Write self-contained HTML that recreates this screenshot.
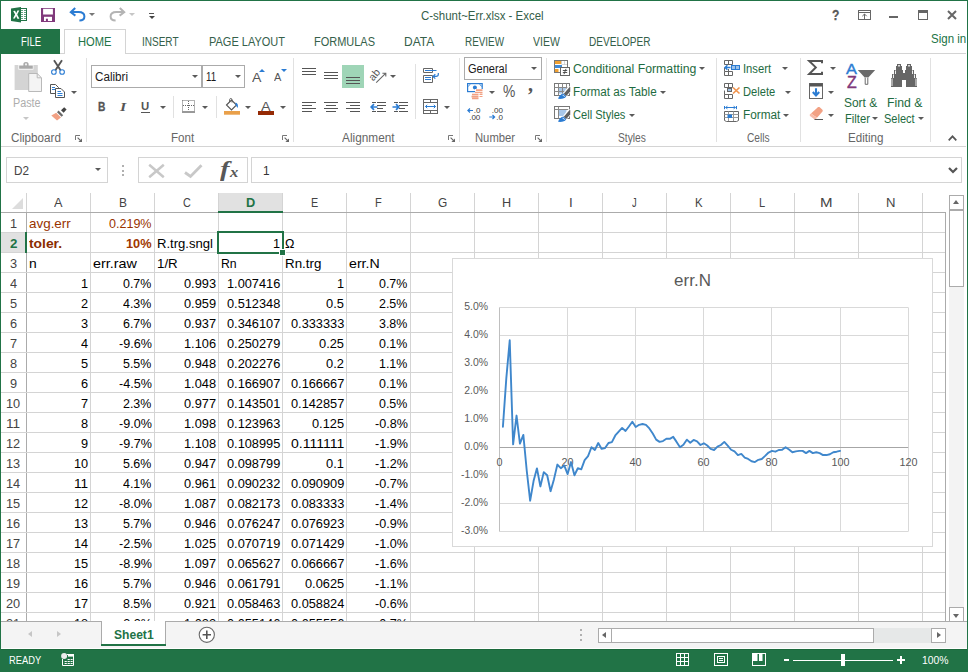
<!DOCTYPE html><html><head><meta charset="utf-8"><title>C-shunt~Err.xlsx - Excel</title><style>
*{box-sizing:border-box;margin:0;padding:0}
html,body{width:968px;height:672px;overflow:hidden;background:#fff}
body{font-family:"Liberation Sans",sans-serif;font-size:12px;color:#444;position:relative}
#w{position:absolute;left:0;top:0;width:968px;height:672px;overflow:hidden;background:#fff}
.a{position:absolute}
.t{position:absolute;white-space:nowrap;line-height:1}
.sep{position:absolute;width:1px;background:#e1e1e1}
.car{position:absolute;width:0;height:0;border-left:3px solid transparent;border-right:3px solid transparent;border-top:3px solid #5a5a5a}
svg{position:absolute;overflow:visible}
</style></head><body><div id="w">
<svg style="left:11px;top:6px" width="17" height="17" viewBox="0 0 17 17">
<rect x="8" y="2.5" width="7.5" height="12" fill="#fff" stroke="#217346" stroke-width="1"/>
<g stroke="#4f9a72" stroke-width="0.9"><path d="M10 4.5h2M13 4.5h2M10 6.5h2M13 6.5h2M10 8.5h2M13 8.5h2M10 10.5h2M13 10.5h2M10 12.5h2M13 12.5h2"/></g>
<path d="M0 2.6L10 1V16.6L0 15Z" fill="#217346"/>
<path d="M2.2 4.9L4.1 4.8L5.2 7.2L6.4 4.6L8.3 4.5L6.2 8.6L8.4 12.8L6.4 12.7L5.1 10L3.9 12.5L2 12.4L4.1 8.6Z" fill="#fff"/>
</svg>
<svg style="left:41px;top:8px" width="14" height="14" viewBox="0 0 14 14">
<path d="M0 0H14V14H0Z" fill="#80397b"/>
<rect x="2.1" y="0.8" width="9.8" height="5.7" fill="#fff"/>
<rect x="3" y="8.8" width="8" height="4.2" fill="#fff"/>
<rect x="4.9" y="10.7" width="2" height="2.3" fill="#80397b"/>
</svg>
<svg style="left:69px;top:7px" width="17" height="15" viewBox="0 0 17 15">
<path d="M6.2 1L1.8 5.2L6.4 8.6" fill="none" stroke="#2b7cd3" stroke-width="2" stroke-linejoin="miter"/>
<path d="M2.4 5.1H9.6C13.4 5.1 15.4 7.2 15.4 9.6C15.4 12.2 13.2 13.6 10.4 13.6" fill="none" stroke="#2b7cd3" stroke-width="2"/>
</svg>
<div class="car" style="left:89px;top:13px;border-top-color:#777"></div>
<svg style="left:109px;top:7px" width="17" height="15" viewBox="0 0 17 15">
<g transform="translate(17,0) scale(-1,1)">
<path d="M6.2 1L1.8 5.2L6.4 8.6" fill="none" stroke="#b4b4b4" stroke-width="2"/>
<path d="M2.4 5.1H9.6C13.4 5.1 15.4 7.2 15.4 9.6C15.4 12.2 13.2 13.6 10.4 13.6" fill="none" stroke="#b4b4b4" stroke-width="2"/>
</g></svg>
<div class="car" style="left:129px;top:13px;border-top-color:#c6c6c6"></div>
<div class="a" style="left:149px;top:13px;width:5px;height:1px;background:#555"></div>
<div class="car" style="left:148.5px;top:16px;border-top-color:#444"></div>
<div class="t" style="left:421.40px;top:10.14px;font-size:12px;color:#35604a;transform:scaleX(0.9550);transform-origin:0 0;">C-shunt~Err.xlsx - Excel</div>
<div class="t" style="left:832.00px;top:8.05px;font-size:14px;color:#5a5a5a;transform:scaleX(0.8653);transform-origin:0 0;font-weight:bold;-webkit-text-stroke:0.3px #5a5a5a;">?</div>
<svg style="left:858px;top:10px" width="13" height="10" viewBox="0 0 13 10">
<rect x="0.5" y="0.5" width="12" height="9" fill="none" stroke="#666"/><path d="M0.5 2.5H12.5" stroke="#666"/>
<path d="M6.5 9V4M4.3 6.2L6.5 4L8.7 6.2" fill="none" stroke="#666"/></svg>
<div class="a" style="left:889px;top:16px;width:9px;height:2px;background:#666"></div>
<div class="a" style="left:918px;top:10px;width:10px;height:10px;border:1px solid #666;border-top-width:3px"></div>
<svg style="left:947px;top:10px" width="10" height="10" viewBox="0 0 10 10"><path d="M1 1L9 9M9 1L1 9" stroke="#666" stroke-width="2"/></svg>
<div class="a" style="left:1px;top:53px;width:965px;height:1px;background:#d4d4d4"></div>
<div class="a" style="left:1px;top:29px;width:59px;height:25px;background:#217346"></div>
<div class="t" style="left:20.50px;top:36.14px;font-size:12px;color:#fff;transform:scaleX(0.7892);transform-origin:0 0;">FILE</div>
<div class="a" style="left:64px;top:29px;width:62px;height:25px;background:#fff;border:1px solid #d4d4d4;border-bottom:none"></div>
<div class="t" style="left:77.50px;top:36.14px;font-size:12px;color:#217346;transform:scaleX(0.9305);transform-origin:0 0;">HOME</div>
<div class="t" style="left:141.50px;top:36.14px;font-size:12px;color:#35604a;transform:scaleX(0.8335);transform-origin:0 0;">INSERT</div>
<div class="t" style="left:208.50px;top:36.14px;font-size:12px;color:#35604a;transform:scaleX(0.9166);transform-origin:0 0;">PAGE LAYOUT</div>
<div class="t" style="left:314.00px;top:36.14px;font-size:12px;color:#35604a;transform:scaleX(0.9149);transform-origin:0 0;">FORMULAS</div>
<div class="t" style="left:404.40px;top:36.14px;font-size:12px;color:#35604a;transform:scaleX(0.9992);transform-origin:0 0;">DATA</div>
<div class="t" style="left:464.60px;top:36.14px;font-size:12px;color:#35604a;transform:scaleX(0.8238);transform-origin:0 0;">REVIEW</div>
<div class="t" style="left:533.00px;top:36.14px;font-size:12px;color:#35604a;transform:scaleX(0.8739);transform-origin:0 0;">VIEW</div>
<div class="t" style="left:589.00px;top:36.14px;font-size:12px;color:#35604a;transform:scaleX(0.8383);transform-origin:0 0;">DEVELOPER</div>
<div class="t" style="left:931.30px;top:32.84px;font-size:12px;color:#217346;transform:scaleX(0.9593);transform-origin:0 0;">Sign in</div>
<div class="a" style="left:1px;top:146px;width:965px;height:1px;background:#d4d4d4"></div>
<div class="sep" style="left:86px;top:58px;height:84px"></div>
<div class="sep" style="left:293px;top:58px;height:84px"></div>
<div class="sep" style="left:459px;top:58px;height:84px"></div>
<div class="sep" style="left:546px;top:58px;height:84px"></div>
<div class="sep" style="left:716px;top:58px;height:84px"></div>
<div class="sep" style="left:800px;top:58px;height:84px"></div>
<div class="sep" style="left:930px;top:58px;height:84px"></div>
<svg style="left:14px;top:62px" width="28" height="30" viewBox="0 0 28 30">
<path d="M0.6 3H23.8V28H0.6Z" fill="#d4d4d4"/>
<path d="M4.4 3H19.4V7.6H4.4Z" fill="#fff"/>
<path d="M5.2 3.4H9.4V2C9.4 0.7 10.4 0 12 0C13.6 0 14.6 0.7 14.6 2V3.4H18.8V6.8H5.2Z" fill="#a9a9a9"/>
<circle cx="12" cy="2.4" r="1.1" fill="#f0f0f0"/>
<path d="M14.7 11.5H23.2L27.5 15.8V29.5H14.7Z" fill="#f4f4f4" stroke="#b9b9b9"/>
<path d="M23.2 11.5V15.8H27.5" fill="none" stroke="#b9b9b9"/>
</svg>
<div class="t" style="left:12.70px;top:97.14px;font-size:12px;color:#adadad;transform:scaleX(0.8994);transform-origin:0 0;">Paste</div>
<div class="car" style="left:22.6px;top:117px;border-top-color:#c6c6c6"></div>
<svg style="left:51px;top:60px" width="14" height="15" viewBox="0 0 14 15">
<path d="M3 0.3L9.6 10.2M11 0.3L4.4 10.2" stroke="#555" stroke-width="1.9" fill="none"/>
<circle cx="2.9" cy="12" r="2.3" fill="#fff" stroke="#2b7cd3" stroke-width="1.1"/>
<circle cx="11.1" cy="12" r="2.3" fill="#fff" stroke="#2b7cd3" stroke-width="1.1"/></svg>
<svg style="left:50px;top:84px" width="15" height="14" viewBox="0 0 15 14">
<path d="M0.5 0.5H5.5L8.5 3.5V9.5H0.5Z" fill="#fff" stroke="#555"/>
<path d="M2 3.5H5M2 5.5H5" stroke="#2b7cd3"/>
<path d="M5.5 4.5H11L14.5 8V13.5H5.5Z" fill="#fff" stroke="#555"/>
<path d="M7.5 7.5H11M7.5 9.5H12.5M7.5 11.5H12.5" stroke="#2b7cd3"/></svg>
<div class="car" style="left:71.4px;top:90.5px;border-top-color:#5a5a5a"></div>
<svg style="left:51px;top:107px" width="16" height="14" viewBox="0 0 16 14">
<path d="M10 3.2L13.2 0.2L15.6 2.6L12.6 5.8Z" fill="#444"/>
<path d="M7.6 3.6L12.2 8.2L10.6 9.8L6 5.2Z" fill="#6a6a6a"/>
<path d="M5.2 5.8L10 10.6L6 13.5L0.3 8.5Z" fill="#f2a184"/></svg>
<div class="t" style="left:10.50px;top:132.14px;font-size:12px;color:#666;transform:scaleX(0.9715);transform-origin:0 0;">Clipboard</div>
<svg style="left:75px;top:135px" width="7" height="7" viewBox="0 0 7 7"><path d="M0.5 5V0.5H5" fill="none" stroke="#777"/><path d="M2.6 2.6L5.6 5.6" fill="none" stroke="#666" stroke-width="1.1"/><path d="M7 3.4V7H3.4Z" fill="#666"/></svg>
<div class="a" style="left:91px;top:65px;width:111px;height:23px;border:1px solid #ababab;background:#fff"></div>
<div class="a" style="left:202px;top:65px;width:43px;height:23px;border:1px solid #ababab;background:#fff"></div>
<div class="t" style="left:94.80px;top:71.04px;font-size:12px;color:#1a1a1a;transform:scaleX(0.9703);transform-origin:0 0;">Calibri</div>
<div class="t" style="left:205.90px;top:71.04px;font-size:12px;color:#1a1a1a;transform:scaleX(0.8108);transform-origin:0 0;">11</div>
<div class="car" style="left:191.6px;top:75px;border-top-color:#5a5a5a"></div>
<div class="car" style="left:234.5px;top:75px;border-top-color:#5a5a5a"></div>
<div class="t" style="left:251.60px;top:71.10px;font-size:13px;color:#555;transform:scaleX(1.0840);transform-origin:0 0;">A</div>
<div class="a" style="left:258.5px;top:69px;width:0;height:0;border-left:3px solid transparent;border-right:3px solid transparent;border-bottom:3px solid #2b7cd3"></div>
<div class="t" style="left:274.40px;top:73.38px;font-size:10.3px;color:#555;transform:scaleX(1.0625);transform-origin:0 0;">A</div>
<div class="a" style="left:280.5px;top:69px;width:0;height:0;border-left:3px solid transparent;border-right:3px solid transparent;border-top:3px solid #2b7cd3"></div>
<div class="t" style="left:97.80px;top:100.62px;font-size:12.5px;color:#555;transform:scaleX(0.8197);transform-origin:0 0;font-weight:bold;-webkit-text-stroke:0.3px #555;">B</div>
<div class="t" style="left:120.30px;top:100.63px;font-size:12.5px;color:#555;transform:scaleX(1.2746);transform-origin:0 0;font-weight:bold;font-style:italic;font-family:'Liberation Serif',serif;">I</div>
<div class="t" style="left:141.40px;top:100.97px;font-size:11.5px;color:#555;transform:scaleX(0.9873);transform-origin:0 0;font-weight:bold;">U</div>
<div class="a" style="left:141px;top:112px;width:9px;height:1px;background:#555"></div>
<div class="car" style="left:159.5px;top:106px;border-top-color:#5a5a5a"></div>
<div class="sep" style="left:173px;top:96px;height:22px"></div>
<svg style="left:182px;top:100px" width="13" height="13" viewBox="0 0 13 13">
<path d="M0.5 0.5H12.5M0.5 0.5V11M12.5 0.5V11M6.5 1V11M1 5.5H12" stroke="#666" stroke-dasharray="1 1" fill="none"/>
<path d="M0 12H13" stroke="#555" stroke-width="1.2"/></svg>
<div class="car" style="left:202.4px;top:106px;border-top-color:#5a5a5a"></div>
<div class="sep" style="left:216px;top:96px;height:22px"></div>
<svg style="left:224px;top:98px" width="16" height="17" viewBox="0 0 16 17">
<path d="M2.5 7L7.5 2L12.5 7L7.5 12Z" fill="#fff" stroke="#555" stroke-width="1.1"/>
<path d="M5.6 4V1.6C5.6 0.9 6.2 0.5 6.8 0.5C7.5 0.5 8 0.9 8 1.6V4.5" fill="none" stroke="#555" stroke-width="0.9"/>
<path d="M11.5 4.5C13.8 5.2 14.5 7.5 13.6 10C12.8 8.8 12.4 8 11.5 7Z" fill="#2b7cd3"/>
<rect x="0" y="13" width="16" height="3.7" fill="#e9a04a"/></svg>
<div class="car" style="left:245.4px;top:106px;border-top-color:#5a5a5a"></div>
<div class="t" style="left:261.20px;top:99.79px;font-size:13.6px;color:#555;transform:scaleX(1.0582);transform-origin:0 0;">A</div>
<div class="a" style="left:258px;top:111px;width:16px;height:4px;background:#952a05"></div>
<div class="car" style="left:279.5px;top:106px;border-top-color:#5a5a5a"></div>
<div class="t" style="left:170.60px;top:132.14px;font-size:12px;color:#666;transform:scaleX(0.9662);transform-origin:0 0;">Font</div>
<svg style="left:282px;top:135px" width="7" height="7" viewBox="0 0 7 7"><path d="M0.5 5V0.5H5" fill="none" stroke="#777"/><path d="M2.6 2.6L5.6 5.6" fill="none" stroke="#666" stroke-width="1.1"/><path d="M7 3.4V7H3.4Z" fill="#666"/></svg>
<div class="a" style="left:302px;top:68px;width:14px;height:1px;background:#555"></div>
<div class="a" style="left:302px;top:71px;width:14px;height:1px;background:#555"></div>
<div class="a" style="left:302px;top:74px;width:14px;height:1px;background:#555"></div>
<div class="a" style="left:324px;top:72px;width:14px;height:1px;background:#555"></div>
<div class="a" style="left:324px;top:75px;width:14px;height:1px;background:#555"></div>
<div class="a" style="left:324px;top:78px;width:14px;height:1px;background:#555"></div>
<div class="a" style="left:342px;top:65px;width:22px;height:23px;background:#9fd5b7"></div>
<div class="a" style="left:346px;top:77px;width:14px;height:1px;background:#555"></div>
<div class="a" style="left:346px;top:80px;width:14px;height:1px;background:#555"></div>
<div class="a" style="left:346px;top:83px;width:14px;height:1px;background:#555"></div>
<svg style="left:370px;top:67px" width="17" height="17" viewBox="0 0 17 17">
<text x="-1.2" y="11.2" font-size="10.5" fill="#555" font-family="Liberation Sans, sans-serif" transform="rotate(-50 4.5 8)">ab</text>
<path d="M6.2 15.6L15.6 6.4M12.4 6.2H15.8V9.6" fill="none" stroke="#666" stroke-width="1.1"/></svg>
<div class="car" style="left:389.6px;top:75px;border-top-color:#5a5a5a"></div>
<div class="sep" style="left:415px;top:64px;height:55px"></div>
<svg style="left:423px;top:68px" width="17" height="15" viewBox="0 0 17 15">
<path d="M0.5 0.5H9.5V4.5H0.5ZM0.5 7.5H9.5V14.5H0.5Z" fill="#fff" stroke="#666"/>
<path d="M2 2.5H13.5M2 9.5H8M2 11.5H8" fill="none" stroke="#2b7cd3" stroke-width="1"/>
<path d="M15.3 5V6.3C15.3 7.8 14.4 8.4 13 8.4H10.2M12.3 6.2L10 8.4L12.3 10.6" fill="none" stroke="#2b7cd3" stroke-width="1.2"/></svg>
<div class="a" style="left:302px;top:102px;width:14px;height:1px;background:#555"></div>
<div class="a" style="left:302px;top:105px;width:10px;height:1px;background:#555"></div>
<div class="a" style="left:302px;top:108px;width:14px;height:1px;background:#555"></div>
<div class="a" style="left:302px;top:111px;width:10px;height:1px;background:#555"></div>
<div class="a" style="left:324px;top:102px;width:14px;height:1px;background:#555"></div>
<div class="a" style="left:326px;top:105px;width:10px;height:1px;background:#555"></div>
<div class="a" style="left:324px;top:108px;width:14px;height:1px;background:#555"></div>
<div class="a" style="left:326px;top:111px;width:10px;height:1px;background:#555"></div>
<div class="a" style="left:346px;top:102px;width:14px;height:1px;background:#555"></div>
<div class="a" style="left:350px;top:105px;width:10px;height:1px;background:#555"></div>
<div class="a" style="left:346px;top:108px;width:14px;height:1px;background:#555"></div>
<div class="a" style="left:350px;top:111px;width:10px;height:1px;background:#555"></div>
<div class="a" style="left:372px;top:102px;width:4px;height:1px;background:#555"></div>
<div class="a" style="left:377px;top:102px;width:9px;height:1px;background:#555"></div>
<div class="a" style="left:377px;top:105px;width:9px;height:1px;background:#555"></div>
<div class="a" style="left:377px;top:108px;width:6px;height:1px;background:#555"></div>
<div class="a" style="left:372px;top:111px;width:4px;height:1px;background:#555"></div>
<div class="a" style="left:377px;top:111px;width:9px;height:1px;background:#555"></div>
<svg style="left:369.5px;top:103px" width="8" height="8" viewBox="0 0 8 8"><path d="M7.5 4H1.5M4 1.2L1.2 4L4 6.8" fill="none" stroke="#2b7cd3" stroke-width="1.7"/></svg>
<div class="a" style="left:394px;top:102px;width:4px;height:1px;background:#555"></div>
<div class="a" style="left:399px;top:102px;width:9px;height:1px;background:#555"></div>
<div class="a" style="left:399px;top:105px;width:9px;height:1px;background:#555"></div>
<div class="a" style="left:399px;top:108px;width:6px;height:1px;background:#555"></div>
<div class="a" style="left:394px;top:111px;width:4px;height:1px;background:#555"></div>
<div class="a" style="left:399px;top:111px;width:9px;height:1px;background:#555"></div>
<svg style="left:391.5px;top:103px" width="8" height="8" viewBox="0 0 8 8"><path d="M0.5 4H6.5M4 1.2L6.8 4L4 6.8" fill="none" stroke="#2b7cd3" stroke-width="1.7"/></svg>
<svg style="left:423px;top:99px" width="15" height="15" viewBox="0 0 15 15">
<rect x="0.5" y="0.5" width="14" height="14" fill="#fff" stroke="#666"/>
<path d="M0.5 3.5H14.5M0.5 11.5H14.5M7.5 0.5V3.5M7.5 11.5V14.5" stroke="#666"/>
<path d="M2.5 7.5H12.5M4.2 5.8L2.5 7.5L4.2 9.2M10.8 5.8L12.5 7.5L10.8 9.2" fill="none" stroke="#2b7cd3"/></svg>
<div class="car" style="left:444.4px;top:106px;border-top-color:#5a5a5a"></div>
<div class="t" style="left:342.40px;top:132.14px;font-size:12px;color:#666;transform:scaleX(0.9857);transform-origin:0 0;">Alignment</div>
<svg style="left:448px;top:135px" width="7" height="7" viewBox="0 0 7 7"><path d="M0.5 5V0.5H5" fill="none" stroke="#777"/><path d="M2.6 2.6L5.6 5.6" fill="none" stroke="#666" stroke-width="1.1"/><path d="M7 3.4V7H3.4Z" fill="#666"/></svg>
<div class="a" style="left:464px;top:57px;width:78px;height:23px;border:1px solid #ababab;background:#fff"></div>
<div class="t" style="left:467.50px;top:63.14px;font-size:12px;color:#1a1a1a;transform:scaleX(0.9158);transform-origin:0 0;">General</div>
<div class="car" style="left:531.2px;top:67px;border-top-color:#5a5a5a"></div>
<svg style="left:467px;top:83px" width="16" height="16" viewBox="0 0 16 16">
<rect x="0.6" y="0.6" width="14.6" height="8" fill="#fff" stroke="#2b7cd3" stroke-width="1.2"/>
<circle cx="7.9" cy="4.6" r="2" fill="#2b7cd3"/>
<path d="M0.6 3.2C2 3.2 3 2.2 3 0.6M15.2 3.2C13.8 3.2 12.8 2.2 12.8 0.6" stroke="#2b7cd3" fill="none" stroke-width="0.8"/>
<rect x="8" y="6" width="8" height="4.5" fill="#fff"/>
<path d="M9 7.2H15.5M8 9.7H15.5" stroke="#f2a184" stroke-width="1.8"/>
<rect x="4" y="10.2" width="9" height="6" fill="#fff"/>
<path d="M5 11.5H11.5M4.5 13.6H11.5M5 15.5H11.5" stroke="#f2a184" stroke-width="1.6"/>
<path d="M12.5 11.5H15.5M12.5 13.5H15.5" stroke="#f2a184" stroke-width="1.2"/></svg>
<div class="car" style="left:488.6px;top:90.5px;border-top-color:#5a5a5a"></div>
<div class="t" style="left:503.40px;top:83.43px;font-size:16.5px;color:#555;transform:scaleX(0.8384);transform-origin:0 0;">%</div>
<div class="t" style="left:528.00px;top:74.35px;font-size:20px;color:#555;transform:scaleX(1.0000);transform-origin:0 0;font-weight:bold;font-family:'Liberation Serif',serif;">,</div>
<svg style="left:467px;top:107px" width="15" height="13" viewBox="0 0 15 13">
<path d="M6 3.5H1M3 1.5L0.9 3.5L3 5.5" fill="none" stroke="#2b7cd3" stroke-width="1.2"/>
<text x="6.8" y="6" font-size="8" fill="#3a3a3a" font-family="Liberation Sans, sans-serif">.0</text>
<text x="2.2" y="12.9" font-size="8" fill="#3a3a3a" font-family="Liberation Sans, sans-serif">.00</text></svg>
<svg style="left:489px;top:107px" width="15" height="13" viewBox="0 0 15 13">
<text x="2.8" y="6" font-size="8" fill="#3a3a3a" font-family="Liberation Sans, sans-serif">.00</text>
<path d="M0.3 10H5.5M3.5 8L5.6 10L3.5 12" fill="none" stroke="#2b7cd3" stroke-width="1.2"/>
<text x="7.2" y="12.9" font-size="8" fill="#3a3a3a" font-family="Liberation Sans, sans-serif">.0</text></svg>
<div class="t" style="left:474.80px;top:132.14px;font-size:12px;color:#666;transform:scaleX(0.9372);transform-origin:0 0;">Number</div>
<svg style="left:535.4px;top:135px" width="7" height="7" viewBox="0 0 7 7"><path d="M0.5 5V0.5H5" fill="none" stroke="#777"/><path d="M2.6 2.6L5.6 5.6" fill="none" stroke="#666" stroke-width="1.1"/><path d="M7 3.4V7H3.4Z" fill="#666"/></svg>
<svg style="left:554px;top:60px" width="16" height="16" viewBox="0 0 16 16"><rect x="0.5" y="0.5" width="13" height="12" fill="#fff" stroke="#777"/><rect x="1" y="1" width="6.5" height="3" fill="#f0a030"/><rect x="1" y="5" width="7" height="3" fill="#3f8ad6"/><rect x="1" y="9" width="3.5" height="3" fill="#f0a030"/><path d="M7.5 1V4M10.5 1V5M7.5 4.5H13" stroke="#ccc" stroke-width="0.8" fill="none"/><rect x="6.5" y="7.5" width="9" height="8" fill="#fff" stroke="#666"/><path d="M8.8 10.5H13.2M8.8 12.5H13.2M10 14.2L12 8.8" stroke="#444" stroke-width="0.9" fill="none"/></svg>
<svg style="left:554px;top:83px" width="16" height="16" viewBox="0 0 16 16"><rect x="0.5" y="0.5" width="15" height="12" fill="#fff" stroke="#777"/><rect x="4.5" y="4.5" width="8" height="6" fill="#a9c8ea"/><path d="M0.5 4.5H15.5M0.5 8.5H15.5M4.5 0.5V12.5M8.5 0.5V12.5M12.5 0.5V12.5" stroke="#888" fill="none"/><path d="M7.5 12L14.5 3L17 4L16.8 9L11.5 14.5Z" fill="#fff"/><path d="M9.8 10.8L15.6 4L16.3 4.3L16.2 8.6L12 13.2Z" fill="#606060"/><path d="M4 15.8C5 13 7 11 9.6 10.6L12.2 13.4C11 15.2 8 16.3 4 15.8Z" fill="#2b7cd3"/><path d="M8.6 12.2C9.6 12.2 10.4 12.9 10.4 13.8" stroke="#fff" stroke-width="0.9" fill="none"/></svg>
<svg style="left:554px;top:106px" width="16" height="16" viewBox="0 0 16 16"><rect x="0.5" y="0.5" width="15" height="12" fill="#fff" stroke="#777"/><rect x="4.5" y="3.5" width="8" height="6.5" fill="#a9c8ea"/><path d="M0.5 3.5H15.5M4.5 0.5V12.5" stroke="#888" fill="none"/><path d="M7.5 12L14.5 3L17 4L16.8 9L11.5 14.5Z" fill="#fff"/><path d="M9.8 10.8L15.6 4L16.3 4.3L16.2 8.6L12 13.2Z" fill="#606060"/><path d="M4 15.8C5 13 7 11 9.6 10.6L12.2 13.4C11 15.2 8 16.3 4 15.8Z" fill="#2b7cd3"/><path d="M8.6 12.2C9.6 12.2 10.4 12.9 10.4 13.8" stroke="#fff" stroke-width="0.9" fill="none"/></svg>
<div class="t" style="left:573.20px;top:62.94px;font-size:12px;color:#1e6b41;transform:scaleX(1.0213);transform-origin:0 0;">Conditional Formatting</div>
<div class="car" style="left:699.4px;top:67px;border-top-color:#5a5a5a"></div>
<div class="t" style="left:573.20px;top:85.94px;font-size:12px;color:#1e6b41;transform:scaleX(0.9753);transform-origin:0 0;">Format as Table</div>
<div class="car" style="left:659.5px;top:90.5px;border-top-color:#5a5a5a"></div>
<div class="t" style="left:573.20px;top:108.94px;font-size:12px;color:#1e6b41;transform:scaleX(0.9244);transform-origin:0 0;">Cell Styles</div>
<div class="car" style="left:628.5px;top:113.5px;border-top-color:#5a5a5a"></div>
<div class="t" style="left:617.50px;top:132.14px;font-size:12px;color:#666;transform:scaleX(0.8538);transform-origin:0 0;">Styles</div>
<svg style="left:724px;top:60px" width="16" height="16" viewBox="0 0 16 16">
<path d="M0.5 0.5H8.5V4.5H0.5ZM0.5 11.5H8.5V15.5H0.5ZM4.5 0.5V4.5M4.5 11.5V15.5M0.5 7.5V11.5M4.5 9V11.5" fill="none" stroke="#666"/>
<rect x="7.5" y="5.5" width="8" height="4" fill="#9dc3ea" stroke="#2b7cd3"/><path d="M11.5 5.5V9.5" stroke="#2b7cd3"/>
<path d="M6.5 7.5H1.2M3.4 5.2L1 7.5L3.4 9.8" fill="none" stroke="#2b7cd3" stroke-width="1.4"/></svg>
<svg style="left:724px;top:83px" width="16" height="16" viewBox="0 0 16 16">
<path d="M0.5 0.5H8.5V4.5H0.5ZM0.5 11.5H8.5V15.5H0.5ZM4.5 0.5V4.5M4.5 11.5V15.5M0.5 7.5V11.5" fill="none" stroke="#666"/>
<rect x="3.5" y="5.5" width="4" height="3" fill="#9dc3ea" stroke="#666"/>
<path d="M9 4.5L15.5 10.5M15.5 4.5L9 10.5" stroke="#f0944e" stroke-width="1.7"/></svg>
<svg style="left:724px;top:106px" width="15" height="16" viewBox="0 0 15 16">
<path d="M1.5 1.5H11.5M0.5 0V3.2M12.5 0V3.2M3.4 0.2L1.6 1.5L3.4 2.8M9.6 0.2L11.4 1.5L9.6 2.8" stroke="#2b7cd3" fill="none"/>
<path d="M0.5 5.5H14.5V14.5L12.5 15.5H2.5L0.5 14.5Z" fill="#fff" stroke="#666"/>
<path d="M0.5 8.5H14.5M0.5 11.5H14.5M4.5 5.5V15M9.5 5.5V15" stroke="#999"/>
<rect x="3.5" y="8.5" width="4.5" height="3.5" fill="#2b7cd3"/></svg>
<div class="t" style="left:743.30px;top:62.94px;font-size:12px;color:#1e6b41;transform:scaleX(0.9363);transform-origin:0 0;">Insert</div>
<div class="car" style="left:781.5px;top:67px;border-top-color:#5a5a5a"></div>
<div class="t" style="left:743.30px;top:85.94px;font-size:12px;color:#1e6b41;transform:scaleX(0.9283);transform-origin:0 0;">Delete</div>
<div class="car" style="left:785.4px;top:90.5px;border-top-color:#5a5a5a"></div>
<div class="t" style="left:743.30px;top:108.94px;font-size:12px;color:#1e6b41;transform:scaleX(0.9841);transform-origin:0 0;">Format</div>
<div class="car" style="left:783.4px;top:113.5px;border-top-color:#5a5a5a"></div>
<div class="t" style="left:746.90px;top:132.14px;font-size:12px;color:#666;transform:scaleX(0.8473);transform-origin:0 0;">Cells</div>
<svg style="left:808px;top:60px" width="15" height="15" viewBox="0 0 15 15">
<path d="M14 3.2V1H1.2L7.8 7.4L1.2 14H14V11.8" fill="none" stroke="#555" stroke-width="2" stroke-linejoin="miter"/></svg>
<div class="car" style="left:829.6px;top:67px;border-top-color:#5a5a5a"></div>
<svg style="left:809px;top:83px" width="14" height="16" viewBox="0 0 14 16">
<rect x="0.5" y="0.5" width="13" height="15" fill="#fff" stroke="#666"/><rect x="0.5" y="0.5" width="13" height="3" fill="#555"/>
<path d="M7 5.2V12.3M3.8 9L7 12.4L10.2 9" fill="none" stroke="#2b7cd3" stroke-width="2.1"/></svg>
<div class="car" style="left:827.6px;top:90.5px;border-top-color:#5a5a5a"></div>
<svg style="left:809px;top:107px" width="15" height="13" viewBox="0 0 15 13">
<path d="M8.6 0.6C9.4 -0.1 10.3 0 11 0.5L13.2 2.4C13.9 3.1 13.9 4 13.3 4.8L8 10.8L2 6.5Z" fill="#f2a184"/><path d="M2 6.5L8 10.8L7 11.9C6.3 12.4 5.6 12.3 5 11.9L1 8.9C0.5 8.4 0.5 7.8 1 7.3Z" fill="#f7bba8"/>
<path d="M5.5 12.5H14" stroke="#555"/></svg>
<div class="car" style="left:827.6px;top:113.5px;border-top-color:#5a5a5a"></div>
<div class="t" style="left:846.00px;top:61.38px;font-size:15.5px;color:#2b7cd3;transform:scaleX(1.0543);transform-origin:0 0;-webkit-text-stroke:0.4px #2b7cd3;">A</div>
<div class="t" style="left:846.80px;top:75.16px;font-size:16px;color:#80397b;transform:scaleX(0.9925);transform-origin:0 0;-webkit-text-stroke:0.4px #80397b;">Z</div>
<svg style="left:857px;top:70px" width="19" height="15" viewBox="0 0 19 15">
<path d="M0.8 0H18.2L11.3 7.6H7.7Z" fill="#6a6a6a"/><path d="M8.2 7.6V14.3H10.8V7.6" fill="#fff" stroke="#6a6a6a" stroke-width="1"/></svg>
<div class="t" style="left:844.40px;top:97.24px;font-size:12px;color:#1e6b41;transform:scaleX(0.9956);transform-origin:0 0;">Sort &amp;</div>
<div class="t" style="left:844.70px;top:113.14px;font-size:12px;color:#1e6b41;transform:scaleX(0.9337);transform-origin:0 0;">Filter</div>
<div class="car" style="left:872.4px;top:117px;border-top-color:#5a5a5a"></div>
<svg style="left:891px;top:64px" width="26" height="23" viewBox="0 0 26 23">
<path d="M6 0H10V2H11V6H12V9H14V6H15V2H16V0H20V2H21V6H23V10H25V14H26V23H15V16H11V23H0V14H1V10H3V6H5V2H6Z" fill="#666"/>
<path d="M7 1H9V2.5H7ZM17 1H19V2.5H17Z" fill="#ddd"/>
<path d="M1 14.5V22M25 14.5V22M2.5 10.5V14M23.5 10.5V14M4.5 6.5V10M21.5 6.5V10" stroke="#fff" stroke-width="0.9"/></svg>
<div class="t" style="left:886.50px;top:97.24px;font-size:12px;color:#1e6b41;transform:scaleX(1.0207);transform-origin:0 0;">Find &amp;</div>
<div class="t" style="left:884.40px;top:113.14px;font-size:12px;color:#1e6b41;transform:scaleX(0.9175);transform-origin:0 0;">Select</div>
<div class="car" style="left:917.5px;top:117px;border-top-color:#5a5a5a"></div>
<div class="t" style="left:847.90px;top:132.14px;font-size:12px;color:#666;transform:scaleX(0.9675);transform-origin:0 0;">Editing</div>
<svg style="left:948px;top:135px" width="9" height="6" viewBox="0 0 9 6"><path d="M0.7 5.3L4.5 1.3L8.3 5.3" fill="none" stroke="#555" stroke-width="1.7"/></svg>
<div class="a" style="left:6px;top:157px;width:102px;height:26px;border:1px solid #d4d4d4;background:#fff"></div>
<div class="t" style="left:13.90px;top:165.24px;font-size:12px;color:#444;transform:scaleX(0.9778);transform-origin:0 0;">D2</div>
<div class="car" style="left:94.5px;top:167.5px;border-top-color:#5a5a5a"></div>
<div class="a" style="left:122px;top:165px;width:2px;height:2px;background:#b0b0b0"></div>
<div class="a" style="left:122px;top:169.5px;width:2px;height:2px;background:#b0b0b0"></div>
<div class="a" style="left:122px;top:174px;width:2px;height:2px;background:#b0b0b0"></div>
<div class="a" style="left:138px;top:157px;width:110px;height:26px;border:1px solid #d4d4d4;background:#fff"></div>
<svg style="left:148px;top:164px" width="17" height="14" viewBox="0 0 17 14"><path d="M1.2 0.8L15.8 13.2M15.8 0.8L1.2 13.2" stroke="#c8c8c8" stroke-width="2.5"/></svg>
<svg style="left:184px;top:164px" width="19" height="14" viewBox="0 0 19 14"><path d="M1 8.5L6.5 12.5L17.5 1.2" fill="none" stroke="#c8c8c8" stroke-width="2.8"/></svg>
<div class="t" style="left:220.00px;top:159.05px;font-size:20px;color:#585858;transform:scaleX(1.4262);transform-origin:0 0;font-weight:bold;font-style:italic;font-family:'Liberation Serif',serif;">f</div>
<div class="t" style="left:229.50px;top:164.66px;font-size:14.5px;color:#585858;transform:scaleX(1.1448);transform-origin:0 0;font-weight:bold;font-style:italic;font-family:'Liberation Serif',serif;">x</div>
<div class="a" style="left:251px;top:157px;width:711px;height:26px;border:1px solid #d4d4d4;background:#fff"></div>
<div class="t" style="left:263.00px;top:165.24px;font-size:12px;color:#333;transform:scaleX(0.9889);transform-origin:0 0;">1</div>
<svg style="left:948px;top:167px" width="10" height="7" viewBox="0 0 10 7"><path d="M1 1L5 5L9 1" fill="none" stroke="#555" stroke-width="2.2"/></svg>
<svg style="left:12px;top:198px" width="11" height="11" viewBox="0 0 11 11"><path d="M11 0V11H0Z" fill="#dddddd"/></svg>
<div class="a" style="left:219px;top:193px;width:64px;height:19px;background:#e1e1e1"></div>
<div class="a" style="left:1px;top:233px;width:25px;height:20px;background:#e1e1e1"></div>
<div class="t" style="left:54.26px;top:196.30px;font-size:13.0px;color:#444;transform:scaleX(0.9787);transform-origin:0 0;">A</div>
<div class="t" style="left:118.51px;top:196.30px;font-size:13.0px;color:#444;transform:scaleX(0.9201);transform-origin:0 0;">B</div>
<div class="t" style="left:182.59px;top:196.30px;font-size:13.0px;color:#444;transform:scaleX(0.8330);transform-origin:0 0;">C</div>
<div class="t" style="left:245.88px;top:196.30px;font-size:13.0px;color:#217346;transform:scaleX(0.9848);transform-origin:0 0;font-weight:bold;">D</div>
<div class="t" style="left:310.92px;top:196.30px;font-size:13.0px;color:#444;transform:scaleX(0.8259);transform-origin:0 0;">E</div>
<div class="t" style="left:375.13px;top:196.30px;font-size:13.0px;color:#444;transform:scaleX(0.8487);transform-origin:0 0;">F</div>
<div class="t" style="left:437.87px;top:196.30px;font-size:13.0px;color:#444;transform:scaleX(0.9151);transform-origin:0 0;">G</div>
<div class="t" style="left:501.93px;top:196.30px;font-size:13.0px;color:#444;transform:scaleX(0.9733);transform-origin:0 0;">H</div>
<div class="t" style="left:568.65px;top:196.30px;font-size:13.0px;color:#444;transform:scaleX(1.0234);transform-origin:0 0;">I</div>
<div class="t" style="left:632.16px;top:196.30px;font-size:13.0px;color:#444;transform:scaleX(0.7194);transform-origin:0 0;">J</div>
<div class="t" style="left:694.69px;top:196.30px;font-size:13.0px;color:#444;transform:scaleX(0.8787);transform-origin:0 0;">K</div>
<div class="t" style="left:759.42px;top:196.30px;font-size:13.0px;color:#444;transform:scaleX(0.8528);transform-origin:0 0;">L</div>
<div class="t" style="left:820.23px;top:196.30px;font-size:13.0px;color:#444;transform:scaleX(1.1580);transform-origin:0 0;">M</div>
<div class="t" style="left:885.77px;top:196.30px;font-size:13.0px;color:#444;transform:scaleX(1.0084);transform-origin:0 0;">N</div>
<div class="a" style="left:26px;top:193px;width:1px;height:19px;background:#d4d4d4"></div>
<div class="a" style="left:90px;top:193px;width:1px;height:19px;background:#d4d4d4"></div>
<div class="a" style="left:154px;top:193px;width:1px;height:19px;background:#d4d4d4"></div>
<div class="a" style="left:218px;top:193px;width:1px;height:19px;background:#d4d4d4"></div>
<div class="a" style="left:282px;top:193px;width:1px;height:19px;background:#d4d4d4"></div>
<div class="a" style="left:346px;top:193px;width:1px;height:19px;background:#d4d4d4"></div>
<div class="a" style="left:410px;top:193px;width:1px;height:19px;background:#d4d4d4"></div>
<div class="a" style="left:474px;top:193px;width:1px;height:19px;background:#d4d4d4"></div>
<div class="a" style="left:538px;top:193px;width:1px;height:19px;background:#d4d4d4"></div>
<div class="a" style="left:602px;top:193px;width:1px;height:19px;background:#d4d4d4"></div>
<div class="a" style="left:666px;top:193px;width:1px;height:19px;background:#d4d4d4"></div>
<div class="a" style="left:730px;top:193px;width:1px;height:19px;background:#d4d4d4"></div>
<div class="a" style="left:794px;top:193px;width:1px;height:19px;background:#d4d4d4"></div>
<div class="a" style="left:858px;top:193px;width:1px;height:19px;background:#d4d4d4"></div>
<div class="a" style="left:922px;top:193px;width:1px;height:19px;background:#d4d4d4"></div>
<div class="a" id="grid" style="left:1px;top:212px;width:945px;height:409px;overflow:hidden">
<div class="a" style="left:25px;top:0;width:1px;height:420px;background:#ababab"></div>
<div class="a" style="left:89px;top:0;width:1px;height:420px;background:#d4d4d4"></div>
<div class="a" style="left:153px;top:0;width:1px;height:420px;background:#d4d4d4"></div>
<div class="a" style="left:217px;top:0;width:1px;height:420px;background:#d4d4d4"></div>
<div class="a" style="left:281px;top:0;width:1px;height:420px;background:#d4d4d4"></div>
<div class="a" style="left:345px;top:0;width:1px;height:420px;background:#d4d4d4"></div>
<div class="a" style="left:409px;top:0;width:1px;height:420px;background:#d4d4d4"></div>
<div class="a" style="left:473px;top:0;width:1px;height:420px;background:#d4d4d4"></div>
<div class="a" style="left:537px;top:0;width:1px;height:420px;background:#d4d4d4"></div>
<div class="a" style="left:601px;top:0;width:1px;height:420px;background:#d4d4d4"></div>
<div class="a" style="left:665px;top:0;width:1px;height:420px;background:#d4d4d4"></div>
<div class="a" style="left:729px;top:0;width:1px;height:420px;background:#d4d4d4"></div>
<div class="a" style="left:793px;top:0;width:1px;height:420px;background:#d4d4d4"></div>
<div class="a" style="left:857px;top:0;width:1px;height:420px;background:#d4d4d4"></div>
<div class="a" style="left:921px;top:0;width:1px;height:420px;background:#d4d4d4"></div>
<div class="a" style="left:0;top:0px;width:945px;height:1px;background:#ababab"></div>
<div class="a" style="left:0;top:20px;width:945px;height:1px;background:#d4d4d4"></div>
<div class="a" style="left:0;top:40px;width:945px;height:1px;background:#d4d4d4"></div>
<div class="a" style="left:0;top:60px;width:945px;height:1px;background:#d4d4d4"></div>
<div class="a" style="left:0;top:80px;width:945px;height:1px;background:#d4d4d4"></div>
<div class="a" style="left:0;top:100px;width:945px;height:1px;background:#d4d4d4"></div>
<div class="a" style="left:0;top:120px;width:945px;height:1px;background:#d4d4d4"></div>
<div class="a" style="left:0;top:140px;width:945px;height:1px;background:#d4d4d4"></div>
<div class="a" style="left:0;top:160px;width:945px;height:1px;background:#d4d4d4"></div>
<div class="a" style="left:0;top:180px;width:945px;height:1px;background:#d4d4d4"></div>
<div class="a" style="left:0;top:200px;width:945px;height:1px;background:#d4d4d4"></div>
<div class="a" style="left:0;top:220px;width:945px;height:1px;background:#d4d4d4"></div>
<div class="a" style="left:0;top:240px;width:945px;height:1px;background:#d4d4d4"></div>
<div class="a" style="left:0;top:260px;width:945px;height:1px;background:#d4d4d4"></div>
<div class="a" style="left:0;top:280px;width:945px;height:1px;background:#d4d4d4"></div>
<div class="a" style="left:0;top:300px;width:945px;height:1px;background:#d4d4d4"></div>
<div class="a" style="left:0;top:320px;width:945px;height:1px;background:#d4d4d4"></div>
<div class="a" style="left:0;top:340px;width:945px;height:1px;background:#d4d4d4"></div>
<div class="a" style="left:0;top:360px;width:945px;height:1px;background:#d4d4d4"></div>
<div class="a" style="left:0;top:380px;width:945px;height:1px;background:#d4d4d4"></div>
<div class="a" style="left:0;top:400px;width:945px;height:1px;background:#d4d4d4"></div>
<div class="a" style="left:0;top:420px;width:945px;height:1px;background:#d4d4d4"></div>
<div class="a" style="left:944px;top:0;width:1px;height:420px;background:#ababab"></div>
</div>
<div class="a" style="left:0;top:0;width:946px;height:621px;overflow:hidden">
<div class="t" style="left:9.86px;top:217.10px;font-size:13.0px;color:#444;transform:scaleX(0.9798);transform-origin:0 0;">1</div>
<div class="t" style="left:9.68px;top:237.10px;font-size:13.0px;color:#217346;transform:scaleX(1.0281);transform-origin:0 0;font-weight:bold;">2</div>
<div class="t" style="left:9.86px;top:257.10px;font-size:13.0px;color:#444;transform:scaleX(0.9798);transform-origin:0 0;">3</div>
<div class="t" style="left:9.86px;top:277.10px;font-size:13.0px;color:#444;transform:scaleX(0.9798);transform-origin:0 0;">4</div>
<div class="t" style="left:9.86px;top:297.10px;font-size:13.0px;color:#444;transform:scaleX(0.9798);transform-origin:0 0;">5</div>
<div class="t" style="left:9.86px;top:317.10px;font-size:13.0px;color:#444;transform:scaleX(0.9798);transform-origin:0 0;">6</div>
<div class="t" style="left:9.86px;top:337.10px;font-size:13.0px;color:#444;transform:scaleX(0.9798);transform-origin:0 0;">7</div>
<div class="t" style="left:9.86px;top:357.10px;font-size:13.0px;color:#444;transform:scaleX(0.9798);transform-origin:0 0;">8</div>
<div class="t" style="left:9.86px;top:377.10px;font-size:13.0px;color:#444;transform:scaleX(0.9798);transform-origin:0 0;">9</div>
<div class="t" style="left:6.32px;top:397.10px;font-size:13.0px;color:#444;transform:scaleX(0.9798);transform-origin:0 0;">10</div>
<div class="t" style="left:6.32px;top:417.10px;font-size:13.0px;color:#444;transform:scaleX(1.0498);transform-origin:0 0;">11</div>
<div class="t" style="left:6.32px;top:437.10px;font-size:13.0px;color:#444;transform:scaleX(0.9798);transform-origin:0 0;">12</div>
<div class="t" style="left:6.32px;top:457.10px;font-size:13.0px;color:#444;transform:scaleX(0.9798);transform-origin:0 0;">13</div>
<div class="t" style="left:6.32px;top:477.10px;font-size:13.0px;color:#444;transform:scaleX(0.9798);transform-origin:0 0;">14</div>
<div class="t" style="left:6.32px;top:497.10px;font-size:13.0px;color:#444;transform:scaleX(0.9798);transform-origin:0 0;">15</div>
<div class="t" style="left:6.32px;top:517.10px;font-size:13.0px;color:#444;transform:scaleX(0.9798);transform-origin:0 0;">16</div>
<div class="t" style="left:6.32px;top:537.10px;font-size:13.0px;color:#444;transform:scaleX(0.9798);transform-origin:0 0;">17</div>
<div class="t" style="left:6.32px;top:557.10px;font-size:13.0px;color:#444;transform:scaleX(0.9798);transform-origin:0 0;">18</div>
<div class="t" style="left:6.32px;top:577.10px;font-size:13.0px;color:#444;transform:scaleX(0.9798);transform-origin:0 0;">19</div>
<div class="t" style="left:6.32px;top:597.10px;font-size:13.0px;color:#444;transform:scaleX(0.9798);transform-origin:0 0;">20</div>
<div class="t" style="left:6.32px;top:617.10px;font-size:13.0px;color:#444;transform:scaleX(0.9798);transform-origin:0 0;">21</div>
<div class="t" style="left:29.20px;top:217.10px;font-size:13.0px;color:#993300;transform:scaleX(1.0326);transform-origin:0 0;">avg.err</div>
<div class="t" style="left:109.28px;top:217.10px;font-size:13.0px;color:#993300;transform:scaleX(0.9644);transform-origin:0 0;">0.219%</div>
<div class="t" style="left:29.20px;top:237.10px;font-size:13.0px;color:#8a2c00;transform:scaleX(1.0653);transform-origin:0 0;font-weight:bold;">toler.</div>
<div class="t" style="left:126.23px;top:237.10px;font-size:13.0px;color:#a03800;transform:scaleX(0.9826);transform-origin:0 0;font-weight:bold;">10%</div>
<div class="t" style="left:157.20px;top:237.10px;font-size:13.0px;color:#000;transform:scaleX(1.0068);transform-origin:0 0;">R.trg.sngl</div>
<div class="t" style="left:272.72px;top:237.10px;font-size:13.0px;color:#000;transform:scaleX(0.9798);transform-origin:0 0;">1</div>
<div class="t" style="left:285.20px;top:237.10px;font-size:13.0px;color:#000;transform:scaleX(0.9659);transform-origin:0 0;">Ω</div>
<div class="t" style="left:29.20px;top:257.10px;font-size:13.0px;color:#000;transform:scaleX(1.0658);transform-origin:0 0;">n</div>
<div class="t" style="left:93.20px;top:257.10px;font-size:13.0px;color:#000;transform:scaleX(1.1036);transform-origin:0 0;">err.raw</div>
<div class="t" style="left:157.20px;top:257.10px;font-size:13.0px;color:#000;transform:scaleX(1.0239);transform-origin:0 0;">1/R</div>
<div class="t" style="left:221.20px;top:257.10px;font-size:13.0px;color:#000;transform:scaleX(0.9429);transform-origin:0 0;">Rn</div>
<div class="t" style="left:285.20px;top:257.10px;font-size:13.0px;color:#000;transform:scaleX(1.0254);transform-origin:0 0;">Rn.trg</div>
<div class="t" style="left:349.20px;top:257.10px;font-size:13.0px;color:#000;transform:scaleX(1.0895);transform-origin:0 0;">err.N</div>
<div class="t" style="left:80.72px;top:277.10px;font-size:13.0px;color:#000;transform:scaleX(0.9798);transform-origin:0 0;">1</div>
<div class="t" style="left:123.45px;top:277.10px;font-size:13.0px;color:#000;transform:scaleX(0.9569);transform-origin:0 0;">0.7%</div>
<div class="t" style="left:183.76px;top:277.10px;font-size:13.0px;color:#000;transform:scaleX(0.9848);transform-origin:0 0;">0.993</div>
<div class="t" style="left:226.51px;top:277.10px;font-size:13.0px;color:#000;transform:scaleX(0.9828);transform-origin:0 0;">1.007416</div>
<div class="t" style="left:336.72px;top:277.10px;font-size:13.0px;color:#000;transform:scaleX(0.9798);transform-origin:0 0;">1</div>
<div class="t" style="left:379.45px;top:277.10px;font-size:13.0px;color:#000;transform:scaleX(0.9569);transform-origin:0 0;">0.7%</div>
<div class="t" style="left:80.72px;top:297.10px;font-size:13.0px;color:#000;transform:scaleX(0.9798);transform-origin:0 0;">2</div>
<div class="t" style="left:123.45px;top:297.10px;font-size:13.0px;color:#000;transform:scaleX(0.9569);transform-origin:0 0;">4.3%</div>
<div class="t" style="left:183.76px;top:297.10px;font-size:13.0px;color:#000;transform:scaleX(0.9848);transform-origin:0 0;">0.959</div>
<div class="t" style="left:226.51px;top:297.10px;font-size:13.0px;color:#000;transform:scaleX(0.9828);transform-origin:0 0;">0.512348</div>
<div class="t" style="left:325.93px;top:297.10px;font-size:13.0px;color:#000;transform:scaleX(0.9888);transform-origin:0 0;">0.5</div>
<div class="t" style="left:379.45px;top:297.10px;font-size:13.0px;color:#000;transform:scaleX(0.9569);transform-origin:0 0;">2.5%</div>
<div class="t" style="left:80.72px;top:317.10px;font-size:13.0px;color:#000;transform:scaleX(0.9798);transform-origin:0 0;">3</div>
<div class="t" style="left:123.45px;top:317.10px;font-size:13.0px;color:#000;transform:scaleX(0.9569);transform-origin:0 0;">6.7%</div>
<div class="t" style="left:183.76px;top:317.10px;font-size:13.0px;color:#000;transform:scaleX(0.9848);transform-origin:0 0;">0.937</div>
<div class="t" style="left:226.51px;top:317.10px;font-size:13.0px;color:#000;transform:scaleX(0.9828);transform-origin:0 0;">0.346107</div>
<div class="t" style="left:290.51px;top:317.10px;font-size:13.0px;color:#000;transform:scaleX(0.9828);transform-origin:0 0;">0.333333</div>
<div class="t" style="left:379.45px;top:317.10px;font-size:13.0px;color:#000;transform:scaleX(0.9569);transform-origin:0 0;">3.8%</div>
<div class="t" style="left:80.72px;top:337.10px;font-size:13.0px;color:#000;transform:scaleX(0.9798);transform-origin:0 0;">4</div>
<div class="t" style="left:118.95px;top:337.10px;font-size:13.0px;color:#000;transform:scaleX(0.9672);transform-origin:0 0;">-9.6%</div>
<div class="t" style="left:183.76px;top:337.10px;font-size:13.0px;color:#000;transform:scaleX(0.9848);transform-origin:0 0;">1.106</div>
<div class="t" style="left:226.51px;top:337.10px;font-size:13.0px;color:#000;transform:scaleX(0.9828);transform-origin:0 0;">0.250279</div>
<div class="t" style="left:318.85px;top:337.10px;font-size:13.0px;color:#000;transform:scaleX(0.9863);transform-origin:0 0;">0.25</div>
<div class="t" style="left:379.45px;top:337.10px;font-size:13.0px;color:#000;transform:scaleX(0.9569);transform-origin:0 0;">0.1%</div>
<div class="t" style="left:80.72px;top:357.10px;font-size:13.0px;color:#000;transform:scaleX(0.9798);transform-origin:0 0;">5</div>
<div class="t" style="left:123.45px;top:357.10px;font-size:13.0px;color:#000;transform:scaleX(0.9569);transform-origin:0 0;">5.5%</div>
<div class="t" style="left:183.76px;top:357.10px;font-size:13.0px;color:#000;transform:scaleX(0.9848);transform-origin:0 0;">0.948</div>
<div class="t" style="left:226.51px;top:357.10px;font-size:13.0px;color:#000;transform:scaleX(0.9828);transform-origin:0 0;">0.202276</div>
<div class="t" style="left:325.93px;top:357.10px;font-size:13.0px;color:#000;transform:scaleX(0.9888);transform-origin:0 0;">0.2</div>
<div class="t" style="left:379.45px;top:357.10px;font-size:13.0px;color:#000;transform:scaleX(0.9569);transform-origin:0 0;">1.1%</div>
<div class="t" style="left:80.72px;top:377.10px;font-size:13.0px;color:#000;transform:scaleX(0.9798);transform-origin:0 0;">6</div>
<div class="t" style="left:118.95px;top:377.10px;font-size:13.0px;color:#000;transform:scaleX(0.9672);transform-origin:0 0;">-4.5%</div>
<div class="t" style="left:183.76px;top:377.10px;font-size:13.0px;color:#000;transform:scaleX(0.9848);transform-origin:0 0;">1.048</div>
<div class="t" style="left:226.51px;top:377.10px;font-size:13.0px;color:#000;transform:scaleX(0.9828);transform-origin:0 0;">0.166907</div>
<div class="t" style="left:290.51px;top:377.10px;font-size:13.0px;color:#000;transform:scaleX(0.9828);transform-origin:0 0;">0.166667</div>
<div class="t" style="left:379.45px;top:377.10px;font-size:13.0px;color:#000;transform:scaleX(0.9569);transform-origin:0 0;">0.1%</div>
<div class="t" style="left:80.72px;top:397.10px;font-size:13.0px;color:#000;transform:scaleX(0.9798);transform-origin:0 0;">7</div>
<div class="t" style="left:123.45px;top:397.10px;font-size:13.0px;color:#000;transform:scaleX(0.9569);transform-origin:0 0;">2.3%</div>
<div class="t" style="left:183.76px;top:397.10px;font-size:13.0px;color:#000;transform:scaleX(0.9848);transform-origin:0 0;">0.977</div>
<div class="t" style="left:226.51px;top:397.10px;font-size:13.0px;color:#000;transform:scaleX(0.9828);transform-origin:0 0;">0.143501</div>
<div class="t" style="left:290.51px;top:397.10px;font-size:13.0px;color:#000;transform:scaleX(0.9828);transform-origin:0 0;">0.142857</div>
<div class="t" style="left:379.45px;top:397.10px;font-size:13.0px;color:#000;transform:scaleX(0.9569);transform-origin:0 0;">0.5%</div>
<div class="t" style="left:80.72px;top:417.10px;font-size:13.0px;color:#000;transform:scaleX(0.9798);transform-origin:0 0;">8</div>
<div class="t" style="left:118.95px;top:417.10px;font-size:13.0px;color:#000;transform:scaleX(0.9672);transform-origin:0 0;">-9.0%</div>
<div class="t" style="left:183.76px;top:417.10px;font-size:13.0px;color:#000;transform:scaleX(0.9848);transform-origin:0 0;">1.098</div>
<div class="t" style="left:226.51px;top:417.10px;font-size:13.0px;color:#000;transform:scaleX(0.9828);transform-origin:0 0;">0.123963</div>
<div class="t" style="left:311.76px;top:417.10px;font-size:13.0px;color:#000;transform:scaleX(0.9848);transform-origin:0 0;">0.125</div>
<div class="t" style="left:374.95px;top:417.10px;font-size:13.0px;color:#000;transform:scaleX(0.9672);transform-origin:0 0;">-0.8%</div>
<div class="t" style="left:80.72px;top:437.10px;font-size:13.0px;color:#000;transform:scaleX(0.9798);transform-origin:0 0;">9</div>
<div class="t" style="left:118.95px;top:437.10px;font-size:13.0px;color:#000;transform:scaleX(0.9672);transform-origin:0 0;">-9.7%</div>
<div class="t" style="left:183.76px;top:437.10px;font-size:13.0px;color:#000;transform:scaleX(0.9848);transform-origin:0 0;">1.108</div>
<div class="t" style="left:226.51px;top:437.10px;font-size:13.0px;color:#000;transform:scaleX(0.9828);transform-origin:0 0;">0.108995</div>
<div class="t" style="left:290.51px;top:437.10px;font-size:13.0px;color:#000;transform:scaleX(1.0788);transform-origin:0 0;">0.111111</div>
<div class="t" style="left:374.95px;top:437.10px;font-size:13.0px;color:#000;transform:scaleX(0.9672);transform-origin:0 0;">-1.9%</div>
<div class="t" style="left:73.63px;top:457.10px;font-size:13.0px;color:#000;transform:scaleX(0.9798);transform-origin:0 0;">10</div>
<div class="t" style="left:123.45px;top:457.10px;font-size:13.0px;color:#000;transform:scaleX(0.9569);transform-origin:0 0;">5.6%</div>
<div class="t" style="left:183.76px;top:457.10px;font-size:13.0px;color:#000;transform:scaleX(0.9848);transform-origin:0 0;">0.947</div>
<div class="t" style="left:226.51px;top:457.10px;font-size:13.0px;color:#000;transform:scaleX(0.9828);transform-origin:0 0;">0.098799</div>
<div class="t" style="left:325.93px;top:457.10px;font-size:13.0px;color:#000;transform:scaleX(0.9888);transform-origin:0 0;">0.1</div>
<div class="t" style="left:374.95px;top:457.10px;font-size:13.0px;color:#000;transform:scaleX(0.9672);transform-origin:0 0;">-1.2%</div>
<div class="t" style="left:73.63px;top:477.10px;font-size:13.0px;color:#000;transform:scaleX(1.0498);transform-origin:0 0;">11</div>
<div class="t" style="left:123.45px;top:477.10px;font-size:13.0px;color:#000;transform:scaleX(0.9569);transform-origin:0 0;">4.1%</div>
<div class="t" style="left:183.76px;top:477.10px;font-size:13.0px;color:#000;transform:scaleX(0.9848);transform-origin:0 0;">0.961</div>
<div class="t" style="left:226.51px;top:477.10px;font-size:13.0px;color:#000;transform:scaleX(0.9828);transform-origin:0 0;">0.090232</div>
<div class="t" style="left:290.51px;top:477.10px;font-size:13.0px;color:#000;transform:scaleX(0.9828);transform-origin:0 0;">0.090909</div>
<div class="t" style="left:374.95px;top:477.10px;font-size:13.0px;color:#000;transform:scaleX(0.9672);transform-origin:0 0;">-0.7%</div>
<div class="t" style="left:73.63px;top:497.10px;font-size:13.0px;color:#000;transform:scaleX(0.9798);transform-origin:0 0;">12</div>
<div class="t" style="left:118.95px;top:497.10px;font-size:13.0px;color:#000;transform:scaleX(0.9672);transform-origin:0 0;">-8.0%</div>
<div class="t" style="left:183.76px;top:497.10px;font-size:13.0px;color:#000;transform:scaleX(0.9848);transform-origin:0 0;">1.087</div>
<div class="t" style="left:226.51px;top:497.10px;font-size:13.0px;color:#000;transform:scaleX(0.9828);transform-origin:0 0;">0.082173</div>
<div class="t" style="left:290.51px;top:497.10px;font-size:13.0px;color:#000;transform:scaleX(0.9828);transform-origin:0 0;">0.083333</div>
<div class="t" style="left:374.95px;top:497.10px;font-size:13.0px;color:#000;transform:scaleX(0.9672);transform-origin:0 0;">-1.4%</div>
<div class="t" style="left:73.63px;top:517.10px;font-size:13.0px;color:#000;transform:scaleX(0.9798);transform-origin:0 0;">13</div>
<div class="t" style="left:123.45px;top:517.10px;font-size:13.0px;color:#000;transform:scaleX(0.9569);transform-origin:0 0;">5.7%</div>
<div class="t" style="left:183.76px;top:517.10px;font-size:13.0px;color:#000;transform:scaleX(0.9848);transform-origin:0 0;">0.946</div>
<div class="t" style="left:226.51px;top:517.10px;font-size:13.0px;color:#000;transform:scaleX(0.9828);transform-origin:0 0;">0.076247</div>
<div class="t" style="left:290.51px;top:517.10px;font-size:13.0px;color:#000;transform:scaleX(0.9828);transform-origin:0 0;">0.076923</div>
<div class="t" style="left:374.95px;top:517.10px;font-size:13.0px;color:#000;transform:scaleX(0.9672);transform-origin:0 0;">-0.9%</div>
<div class="t" style="left:73.63px;top:537.10px;font-size:13.0px;color:#000;transform:scaleX(0.9798);transform-origin:0 0;">14</div>
<div class="t" style="left:118.95px;top:537.10px;font-size:13.0px;color:#000;transform:scaleX(0.9672);transform-origin:0 0;">-2.5%</div>
<div class="t" style="left:183.76px;top:537.10px;font-size:13.0px;color:#000;transform:scaleX(0.9848);transform-origin:0 0;">1.025</div>
<div class="t" style="left:226.51px;top:537.10px;font-size:13.0px;color:#000;transform:scaleX(0.9828);transform-origin:0 0;">0.070719</div>
<div class="t" style="left:290.51px;top:537.10px;font-size:13.0px;color:#000;transform:scaleX(0.9828);transform-origin:0 0;">0.071429</div>
<div class="t" style="left:374.95px;top:537.10px;font-size:13.0px;color:#000;transform:scaleX(0.9672);transform-origin:0 0;">-1.0%</div>
<div class="t" style="left:73.63px;top:557.10px;font-size:13.0px;color:#000;transform:scaleX(0.9798);transform-origin:0 0;">15</div>
<div class="t" style="left:118.95px;top:557.10px;font-size:13.0px;color:#000;transform:scaleX(0.9672);transform-origin:0 0;">-8.9%</div>
<div class="t" style="left:183.76px;top:557.10px;font-size:13.0px;color:#000;transform:scaleX(0.9848);transform-origin:0 0;">1.097</div>
<div class="t" style="left:226.51px;top:557.10px;font-size:13.0px;color:#000;transform:scaleX(0.9828);transform-origin:0 0;">0.065627</div>
<div class="t" style="left:290.51px;top:557.10px;font-size:13.0px;color:#000;transform:scaleX(0.9828);transform-origin:0 0;">0.066667</div>
<div class="t" style="left:374.95px;top:557.10px;font-size:13.0px;color:#000;transform:scaleX(0.9672);transform-origin:0 0;">-1.6%</div>
<div class="t" style="left:73.63px;top:577.10px;font-size:13.0px;color:#000;transform:scaleX(0.9798);transform-origin:0 0;">16</div>
<div class="t" style="left:123.45px;top:577.10px;font-size:13.0px;color:#000;transform:scaleX(0.9569);transform-origin:0 0;">5.7%</div>
<div class="t" style="left:183.76px;top:577.10px;font-size:13.0px;color:#000;transform:scaleX(0.9848);transform-origin:0 0;">0.946</div>
<div class="t" style="left:226.51px;top:577.10px;font-size:13.0px;color:#000;transform:scaleX(0.9828);transform-origin:0 0;">0.061791</div>
<div class="t" style="left:304.68px;top:577.10px;font-size:13.0px;color:#000;transform:scaleX(0.9839);transform-origin:0 0;">0.0625</div>
<div class="t" style="left:374.95px;top:577.10px;font-size:13.0px;color:#000;transform:scaleX(0.9672);transform-origin:0 0;">-1.1%</div>
<div class="t" style="left:73.63px;top:597.10px;font-size:13.0px;color:#000;transform:scaleX(0.9798);transform-origin:0 0;">17</div>
<div class="t" style="left:123.45px;top:597.10px;font-size:13.0px;color:#000;transform:scaleX(0.9569);transform-origin:0 0;">8.5%</div>
<div class="t" style="left:183.76px;top:597.10px;font-size:13.0px;color:#000;transform:scaleX(0.9848);transform-origin:0 0;">0.921</div>
<div class="t" style="left:226.51px;top:597.10px;font-size:13.0px;color:#000;transform:scaleX(0.9828);transform-origin:0 0;">0.058463</div>
<div class="t" style="left:290.51px;top:597.10px;font-size:13.0px;color:#000;transform:scaleX(0.9828);transform-origin:0 0;">0.058824</div>
<div class="t" style="left:374.95px;top:597.10px;font-size:13.0px;color:#000;transform:scaleX(0.9672);transform-origin:0 0;">-0.6%</div>
<div class="t" style="left:73.63px;top:617.10px;font-size:13.0px;color:#000;transform:scaleX(0.9798);transform-origin:0 0;">18</div>
<div class="t" style="left:118.95px;top:617.10px;font-size:13.0px;color:#000;transform:scaleX(0.9672);transform-origin:0 0;">-2.2%</div>
<div class="t" style="left:183.76px;top:617.10px;font-size:13.0px;color:#000;transform:scaleX(0.9848);transform-origin:0 0;">1.022</div>
<div class="t" style="left:226.51px;top:617.10px;font-size:13.0px;color:#000;transform:scaleX(0.9828);transform-origin:0 0;">0.055146</div>
<div class="t" style="left:290.51px;top:617.10px;font-size:13.0px;color:#000;transform:scaleX(0.9828);transform-origin:0 0;">0.055556</div>
<div class="t" style="left:374.95px;top:617.10px;font-size:13.0px;color:#000;transform:scaleX(0.9672);transform-origin:0 0;">-0.7%</div>
</div>
<div class="a" style="left:25px;top:232px;width:2px;height:21px;background:#217346"></div>
<div class="a" style="left:218px;top:211px;width:65px;height:2px;background:#217346"></div>
<div class="a" style="left:217px;top:231px;width:67px;height:23px;border:2px solid #217346"></div>
<div class="a" style="left:279px;top:249px;width:7px;height:7px;background:#217346;border:1px solid #fff"></div>
<div class="a" style="left:949px;top:195px;width:15px;height:426px;background:#f3f3f3"></div>
<div class="a" style="left:949px;top:195px;width:15px;height:15px;border:1px solid #ababab;background:#fff"></div>
<div class="a" style="left:953px;top:200px;width:0;height:0;border-left:3.5px solid transparent;border-right:3.5px solid transparent;border-bottom:4px solid #666"></div>
<div class="a" style="left:949px;top:210px;width:15px;height:77px;border:1px solid #ababab;background:#fff"></div>
<div class="a" style="left:949px;top:607px;width:15px;height:15px;border:1px solid #ababab;background:#fff"></div>
<div class="a" style="left:953px;top:613.5px;width:0;height:0;border-left:3.5px solid transparent;border-right:3.5px solid transparent;border-top:4px solid #666"></div>
<svg style="left:452px;top:258px" width="481" height="289" viewBox="452 258 481 289"><rect x="452.5" y="258.5" width="480" height="288" fill="#fff" stroke="#d9d9d9"/><path d="M499.5 307.5H908.2" stroke="#d9d9d9"/><path d="M499.5 335.5H908.2" stroke="#d9d9d9"/><path d="M499.5 363.5H908.2" stroke="#d9d9d9"/><path d="M499.5 391.5H908.2" stroke="#d9d9d9"/><path d="M499.5 419.5H908.2" stroke="#d9d9d9"/><path d="M499.5 475.5H908.2" stroke="#d9d9d9"/><path d="M499.5 503.5H908.2" stroke="#d9d9d9"/><path d="M499.5 531.5H908.2" stroke="#d9d9d9"/><path d="M567.5 307.5V531.5" stroke="#d9d9d9"/><path d="M635.5 307.5V531.5" stroke="#d9d9d9"/><path d="M703.5 307.5V531.5" stroke="#d9d9d9"/><path d="M771.5 307.5V531.5" stroke="#d9d9d9"/><path d="M840.5 307.5V531.5" stroke="#d9d9d9"/><path d="M908.5 307.5V531.5" stroke="#d9d9d9"/><path d="M499.5 307.5V531.5" stroke="#bfbfbf"/><path d="M499.5 447.5H908.2" stroke="#a6a6a6"/><text x="464.2" y="310.1" textLength="23.8" lengthAdjust="spacingAndGlyphs" font-size="10.8" fill="#595959" font-family="Liberation Sans, sans-serif">5.0%</text><text x="464.2" y="338.1" textLength="23.8" lengthAdjust="spacingAndGlyphs" font-size="10.8" fill="#595959" font-family="Liberation Sans, sans-serif">4.0%</text><text x="464.2" y="366.1" textLength="23.8" lengthAdjust="spacingAndGlyphs" font-size="10.8" fill="#595959" font-family="Liberation Sans, sans-serif">3.0%</text><text x="464.2" y="394.1" textLength="23.8" lengthAdjust="spacingAndGlyphs" font-size="10.8" fill="#595959" font-family="Liberation Sans, sans-serif">2.0%</text><text x="464.2" y="422.1" textLength="23.8" lengthAdjust="spacingAndGlyphs" font-size="10.8" fill="#595959" font-family="Liberation Sans, sans-serif">1.0%</text><text x="464.2" y="450.1" textLength="23.8" lengthAdjust="spacingAndGlyphs" font-size="10.8" fill="#595959" font-family="Liberation Sans, sans-serif">0.0%</text><text x="461.0" y="478.1" textLength="27.0" lengthAdjust="spacingAndGlyphs" font-size="10.8" fill="#595959" font-family="Liberation Sans, sans-serif">-1.0%</text><text x="461.0" y="506.1" textLength="27.0" lengthAdjust="spacingAndGlyphs" font-size="10.8" fill="#595959" font-family="Liberation Sans, sans-serif">-2.0%</text><text x="461.0" y="534.1" textLength="27.0" lengthAdjust="spacingAndGlyphs" font-size="10.8" fill="#595959" font-family="Liberation Sans, sans-serif">-3.0%</text><text x="499.5" y="466.1" text-anchor="middle" font-size="10.8" fill="#595959" font-family="Liberation Sans, sans-serif">0</text><text x="567.5" y="466.1" text-anchor="middle" font-size="10.8" fill="#595959" font-family="Liberation Sans, sans-serif">20</text><text x="635.5" y="466.1" text-anchor="middle" font-size="10.8" fill="#595959" font-family="Liberation Sans, sans-serif">40</text><text x="703.5" y="466.1" text-anchor="middle" font-size="10.8" fill="#595959" font-family="Liberation Sans, sans-serif">60</text><text x="771.5" y="466.1" text-anchor="middle" font-size="10.8" fill="#595959" font-family="Liberation Sans, sans-serif">80</text><text x="840.5" y="466.1" text-anchor="middle" font-size="10.8" fill="#595959" font-family="Liberation Sans, sans-serif">100</text><text x="908.5" y="466.1" text-anchor="middle" font-size="10.8" fill="#595959" font-family="Liberation Sans, sans-serif">120</text><text x="692.5" y="286" text-anchor="middle" font-size="17" fill="#595959" font-family="Liberation Sans, sans-serif">err.N</text><polyline points="502.91,426.78 506.31,378.34 509.72,340.26 513.12,444.42 516.53,415.58 519.93,443.58 523.34,434.90 526.75,470.74 530.15,500.70 533.56,481.10 536.96,468.36 540.37,486.42 543.78,472.14 547.18,475.22 550.59,491.18 553.99,479.14 557.40,464.58 560.80,468.22 564.21,465.42 567.62,474.10 571.02,462.06 574.43,475.22 577.83,468.22 581.24,469.34 584.65,460.10 588.05,456.18 591.46,447.22 594.86,450.02 598.27,443.02 601.67,448.90 605.08,448.06 608.49,443.02 611.89,442.18 615.30,435.46 618.70,431.54 622.11,427.90 625.52,430.98 628.92,426.50 632.33,421.74 635.73,427.06 639.14,424.82 642.55,423.98 645.95,424.82 649.36,428.46 652.76,433.50 656.17,439.66 659.57,441.90 662.98,441.06 666.39,438.82 669.79,438.82 673.20,436.86 676.60,441.90 680.01,447.22 683.41,444.70 686.82,439.66 690.23,442.74 693.63,439.94 697.04,441.34 700.44,444.98 703.85,443.30 707.26,445.54 710.66,448.90 714.07,450.02 717.47,446.66 720.88,444.98 724.29,441.90 727.69,445.54 731.10,449.74 734.50,451.42 737.91,455.06 741.31,453.94 744.72,457.58 748.13,458.98 751.53,461.22 754.94,462.06 758.34,459.82 761.75,458.98 765.15,455.90 768.56,452.54 771.97,450.86 775.37,451.70 778.78,450.02 782.18,449.74 785.59,447.22 789.00,449.46 792.40,452.26 795.81,451.42 799.21,450.86 802.62,450.86 806.03,453.10 809.43,450.86 812.84,453.10 816.24,452.26 819.65,453.10 823.05,455.06 826.46,455.06 829.87,454.22 833.27,452.26 836.68,451.70 840.08,450.86" fill="none" stroke="#3f87cc" stroke-width="1.9" stroke-linejoin="round" stroke-linecap="round"/></svg>
<div class="a" style="left:1px;top:621px;width:966px;height:27px;background:#f4f4f4;border-top:1px solid #ababab"></div>
<div class="a" style="left:1px;top:648px;width:966px;height:1px;background:#fff"></div>
<div class="a" style="left:28px;top:631px;width:0;height:0;border-top:3.5px solid transparent;border-bottom:3.5px solid transparent;border-right:4.5px solid #c6c6c6"></div>
<div class="a" style="left:57px;top:631px;width:0;height:0;border-top:3.5px solid transparent;border-bottom:3.5px solid transparent;border-left:4.5px solid #c6c6c6"></div>
<div class="a" style="left:101px;top:621px;width:65px;height:25px;background:#fff;border-left:1px solid #ababab;border-right:1px solid #ababab"></div>
<div class="a" style="left:101px;top:644px;width:65px;height:2px;background:#217346"></div>
<div class="t" style="left:113.60px;top:627.90px;font-size:13px;color:#217346;transform:scaleX(0.9289);transform-origin:0 0;font-weight:bold;">Sheet1</div>
<svg style="left:198px;top:626px" width="18" height="18" viewBox="0 0 18 18"><circle cx="8.8" cy="8.8" r="7.6" fill="#fff" stroke="#6a6a6a" stroke-width="1.1"/><path d="M8.8 4.6V13M4.6 8.8H13" stroke="#555" stroke-width="1.6"/></svg>
<div class="a" style="left:580px;top:629px;width:2px;height:2px;background:#b0b0b0"></div>
<div class="a" style="left:580px;top:634px;width:2px;height:2px;background:#b0b0b0"></div>
<div class="a" style="left:580px;top:639px;width:2px;height:2px;background:#b0b0b0"></div>
<div class="a" style="left:598px;top:628px;width:348px;height:15px;background:#e6e8e8"></div>
<div class="a" style="left:598px;top:628px;width:14px;height:15px;border:1px solid #ababab;background:#fff"></div>
<div class="a" style="left:602px;top:632px;width:0;height:0;border-top:3.5px solid transparent;border-bottom:3.5px solid transparent;border-right:4.5px solid #666"></div>
<div class="a" style="left:611px;top:628px;width:263px;height:15px;border:1px solid #ababab;background:#fff"></div>
<div class="a" style="left:931px;top:628px;width:15px;height:15px;border:1px solid #ababab;background:#fff"></div>
<div class="a" style="left:937px;top:632px;width:0;height:0;border-top:3.5px solid transparent;border-bottom:3.5px solid transparent;border-left:4.5px solid #666"></div>
<div class="a" style="left:0;top:649px;width:968px;height:23px;background:#217346;border-top:1px solid #1b693b"></div>
<div class="t" style="left:8.80px;top:655.09px;font-size:11px;color:#fff;transform:scaleX(0.8470);transform-origin:0 0;">READY</div>
<svg style="left:61px;top:653px" width="14" height="14" viewBox="0 0 14 14">
<path d="M1.5 6V12.5H12.5V1.5H6" fill="none" stroke="#fff"/><rect x="7" y="1" width="6" height="2.6" fill="#fff"/>
<path d="M6.6 6.5H8.8M9.6 6.5H11.6M3.6 8.5H5.8M6.6 8.5H8.8M9.6 8.5H11.6M3.6 10.5H5.8M6.6 10.5H8.8M9.6 10.5H11.6" stroke="#fff"/>
<circle cx="3.1" cy="3" r="3" fill="#ececec"/></svg>
<svg style="left:676px;top:653px" width="13" height="13" viewBox="0 0 13 13"><rect x="0.5" y="0.5" width="12" height="12" fill="none" stroke="#fff"/><path d="M0.5 4.5H12.5M0.5 8.5H12.5M4.5 0.5V12.5M8.5 0.5V12.5" stroke="#fff"/></svg>
<svg style="left:714px;top:653px" width="14" height="13" viewBox="0 0 14 13"><rect x="0.5" y="0.5" width="13" height="12" fill="none" stroke="#fff"/><rect x="3.5" y="3.5" width="7" height="6" fill="none" stroke="#fff"/><path d="M5 5.5H9M5 7.5H9" stroke="#fff"/></svg>
<svg style="left:752px;top:653px" width="14" height="13" viewBox="0 0 14 13"><rect x="0.5" y="0.5" width="13" height="12" fill="none" stroke="#fff"/><rect x="1" y="1" width="4.5" height="7" fill="#fff"/><rect x="7" y="1" width="3.5" height="7" fill="#fff"/></svg>
<div class="a" style="left:783.5px;top:659px;width:5.5px;height:2px;background:#fff"></div>
<div class="a" style="left:793px;top:659.5px;width:100px;height:1px;background:#fff"></div>
<div class="a" style="left:841px;top:653.5px;width:4px;height:12px;background:#fff"></div>
<div class="a" style="left:897px;top:659px;width:8px;height:2px;background:#fff"></div>
<div class="a" style="left:900px;top:656px;width:2px;height:8px;background:#fff"></div>
<div class="t" style="left:921.50px;top:655.09px;font-size:11px;color:#fff;transform:scaleX(0.9419);transform-origin:0 0;">100%</div>
<div class="a" style="left:0;top:0;width:968px;height:1px;background:#217346"></div>
<div class="a" style="left:0;top:0;width:1px;height:672px;background:#217346"></div>
<div class="a" style="left:967px;top:0;width:1px;height:672px;background:#217346"></div>
</div></body></html>
